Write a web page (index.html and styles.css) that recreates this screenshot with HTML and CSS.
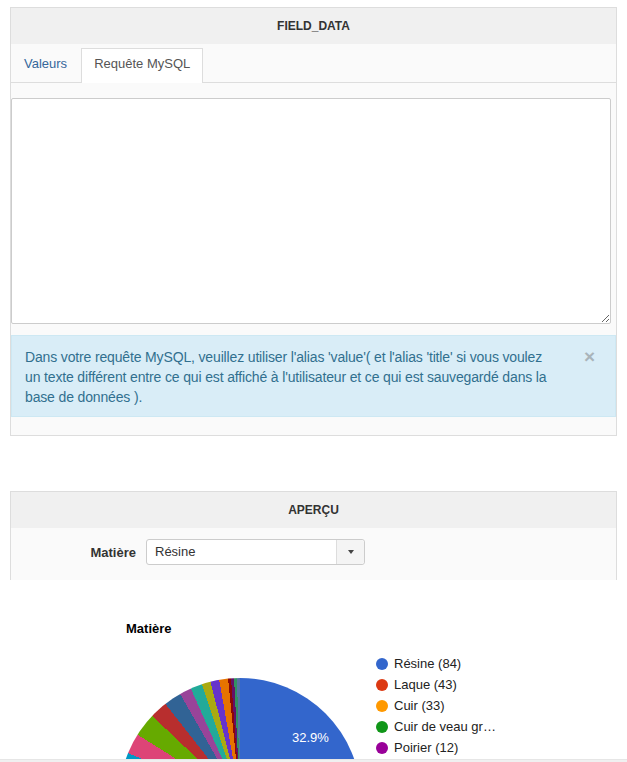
FILE: index.html
```html
<!DOCTYPE html>
<html lang="fr">
<head>
  <meta charset="UTF-8">
  <title>Champ - FIELD_DATA</title>
  <link rel="stylesheet" href="styles.css">
</head>
<body>
  <div class="panel panel-field">
    <div class="panel-heading">FIELD_DATA</div>
    <div class="panel-body">
      <ul class="nav-tabs">
        <li><a href="#values">Valeurs</a></li>
        <li class="active"><a href="#sql">Requête MySQL</a></li>
      </ul>
      <div class="tab-content">
        <textarea class="sql-input"></textarea>
        <div class="alert alert-info">
          <button class="close" type="button">&times;</button>
          Dans votre requête MySQL, veuillez utiliser l'alias 'value'( et l'alias 'title' si vous voulez un texte différent entre ce qui est affiché à l'utilisateur et ce qui est sauvegardé dans la base de données ).
        </div>
      </div>
    </div>
  </div>

  <div class="panel panel-preview">
    <div class="panel-heading">APERÇU</div>
    <div class="panel-body">
      <div class="form-row">
        <label class="form-label">Matière</label>
        <div class="select">
          <span class="select-value">Résine</span>
          <span class="select-btn"><i class="caret"></i></span>
        </div>
      </div>
    </div>
  </div>

  <div class="chart">
    <div class="chart-title">Matière</div>
    <div class="chart-body">
      <div class="pie">
        <span class="pie-label">32.9%</span>
      </div>
      <ul class="legend">
        <li><span class="dot dot-1"></span>Résine (84)</li>
        <li><span class="dot dot-2"></span>Laque (43)</li>
        <li><span class="dot dot-3"></span>Cuir (33)</li>
        <li><span class="dot dot-4"></span>Cuir de veau gr…</li>
        <li><span class="dot dot-5"></span>Poirier (12)</li>
      </ul>
    </div>
  </div>
  <div class="scroll-edge"></div>
</body>
</html>
```

FILE: styles.css
```css
* {
  margin: 0;
  padding: 0;
  box-sizing: border-box;
}

body {
  font-family: "Liberation Sans", Arial, sans-serif;
  font-size: 13px;
  color: #333;
  background: #fff;
  overflow: hidden;
}

.panel {
  width: 607px;
  margin-left: 10px;
  border: 1px solid #ddd;
  background: #fafafa;
}

.panel-field {
  margin-top: 7px;
}

.panel-preview {
  margin-top: 55px;
  border-bottom: 0;
}

.panel-heading {
  height: 36px;
  line-height: 36px;
  text-align: center;
  font-size: 12px;
  font-weight: 700;
  color: #333;
  background: #f0f0f0;
}

/* tabs */
.nav-tabs {
  list-style: none;
  display: flex;
  padding-top: 4px;
  border-bottom: 1px solid #ddd;
}

.nav-tabs li {
  margin-bottom: -1px;
  margin-right: 1px;
}

.nav-tabs a {
  display: block;
  padding: 6px 12px 10px;
  line-height: 18px;
  border: 1px solid transparent;
  border-bottom: 0;
  color: #35679a;
  text-decoration: none;
}

.nav-tabs .active a {
  background: #fff;
  border-color: #ddd;
  color: #555;
}

.tab-content {
  padding: 15px 0 18px;
}

.sql-input {
  display: block;
  width: 600px;
  height: 226px;
  border: 1px solid #ccc;
  border-radius: 2px;
  background: #fff;
  font-family: inherit;
}

.alert {
  position: relative;
  margin-top: 11px;
  padding: 11px 66px 9px 13px;
  font-size: 14px;
  letter-spacing: -0.15px;
  line-height: 20px;
  background: #d9edf7;
  border: 1px solid #cde8f3;
  color: #31708f;
}

.close {
  position: absolute;
  top: 11px;
  right: 20px;
  border: 0;
  background: none;
  font-family: inherit;
  font-size: 19px;
  font-weight: 700;
  line-height: 20px;
  color: #a9b4ba;
  cursor: pointer;
}

/* preview form */
.panel-preview .panel-body {
  height: 52px;
  padding-top: 11px;
}

.form-row {
  display: flex;
  align-items: center;
}

.form-label {
  width: 125px;
  text-align: right;
  font-weight: 700;
  color: #333;
  margin-right: 10px;
}

.select {
  display: flex;
  width: 219px;
  height: 26px;
  border: 1px solid #ccc;
  border-radius: 3px;
  background: #fff;
}

.select-value {
  flex: 1;
  padding-left: 8px;
  line-height: 24px;
  color: #333;
}

.select-btn {
  width: 28px;
  display: flex;
  align-items: center;
  justify-content: center;
  background: #f4f4f4;
  border-left: 1px solid #ddd;
  border-radius: 0 3px 3px 0;
}

.caret {
  width: 0;
  height: 0;
  border-left: 3px solid transparent;
  border-right: 3px solid transparent;
  border-top: 4px solid #444;
}

/* chart */
.chart {
  height: 179px;
  overflow: hidden;
  padding-top: 42px;
}

.chart-title {
  margin-left: 126px;
  line-height: 14px;
  font-weight: 700;
  color: #000;
}

.chart-body {
  display: flex;
  align-items: flex-start;
  margin-top: 17px;
  padding-left: 119px;
}

.pie {
  position: relative;
  width: 242px;
  height: 242px;
  margin-top: 25px;
  border-radius: 50%;
  background: conic-gradient(
    #3366cc 0 32.94%,
    #dc3912 0 49.80%,
    #ff9900 0 62.75%,
    #109618 0 72.55%,
    #990099 0 77.25%,
    #0099c6 0 81.18%,
    #dd4477 0 83.92%,
    #66aa00 0 87.06%,
    #b82e2e 0 89.41%,
    #316395 0 91.76%,
    #994499 0 93.33%,
    #22aa99 0 94.90%,
    #aaaa11 0 96.08%,
    #6633cc 0 97.25%,
    #e67300 0 98.43%,
    #8b0707 0 98.82%,
    #651067 0 99.22%,
    #329262 0 99.61%,
    #5574a6 0 100%
  );
}

.pie-label {
  position: absolute;
  left: 173px;
  top: 52px;
  color: #fff;
  font-size: 13px;
}

.legend {
  list-style: none;
  margin-left: 15px;
  color: #222;
}

.legend li {
  display: flex;
  align-items: center;
  height: 21px;
  white-space: nowrap;
}

.dot {
  width: 12px;
  height: 12px;
  border-radius: 50%;
  margin-right: 6px;
}

.dot-1 { background: #3366cc; }
.dot-2 { background: #dc3912; }
.dot-3 { background: #ff9900; }
.dot-4 { background: #109618; }
.dot-5 { background: #990099; }

.scroll-edge {
  height: 4px;
  background: #f0f0f0;
  border-top: 1px solid #e6e6e6;
}
```
